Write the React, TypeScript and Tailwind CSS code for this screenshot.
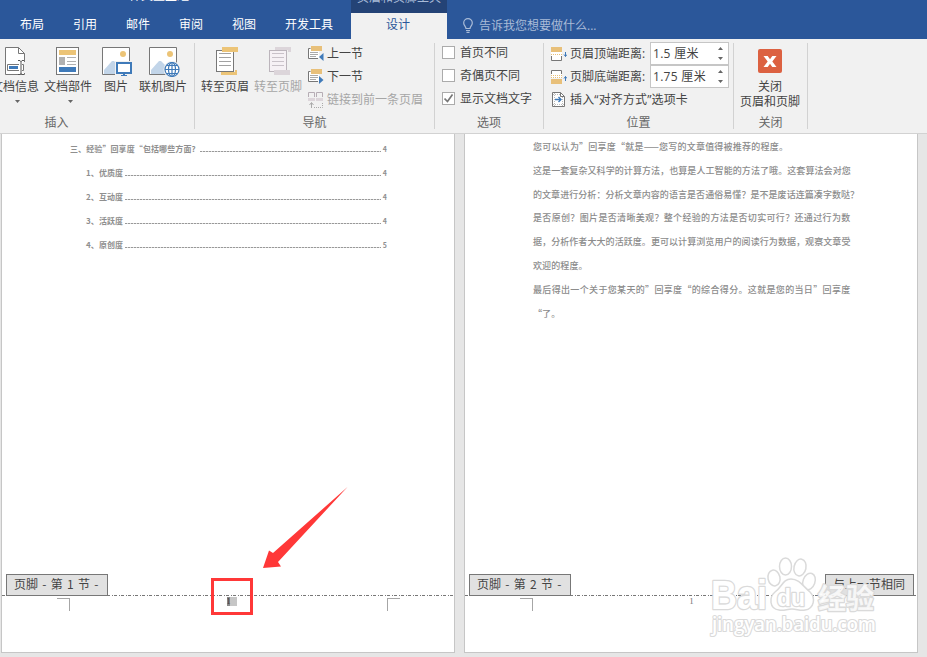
import type { ReactNode } from "react";

const tabs = ["布局", "引用", "邮件", "审阅", "视图", "开发工具"];

const toc = [
  { title: "三、经验”回享度“包括哪些方面?", page: "4", className: "pl-0", leader: "ml-1 mr-0.5" },
  { title: "1、优质度", page: "4", className: "pl-4", leader: "mx-0.5" },
  { title: "2、互动度", page: "4", className: "pl-4", leader: "mx-0.5" },
  { title: "3、活跃度", page: "4", className: "pl-4", leader: "mx-0.5" },
  { title: "4、原创度", page: "5", className: "pl-4", leader: "mx-0.5" },
];

const paragraphs = [
  { text: "您可以认为”回享度“就是——您写的文章值得被推荐的程度。", className: "tracking-[0.22px]" },
  { text: "这是一套复杂又科学的计算方法，也算是人工智能的方法了哦。这套算法会对您", className: "tracking-[0.08px]" },
  { text: "的文章进行分析：分析文章内容的语言是否通俗易懂？是不是废话连篇凑字数哒？", className: "tracking-[0.06px]" },
  { text: "是否原创？图片是否清晰美观？整个经验的方法是否切实可行？还通过行为数", className: "tracking-[0.34px]" },
  { text: "据，分析作者大大的活跃度。更可以计算浏览用户的阅读行为数据，观察文章受", className: "tracking-[0.07px]" },
  { text: "欢迎的程度。", className: "tracking-[0.1px]" },
  { text: "最后得出一个关于您某天的”回享度“的综合得分。这就是您的当日”回享度", className: "tracking-[0.34px]" },
  { text: "“了。", className: "tracking-[0.1px]" },
];

function Group({ label, className, children }: { label: string; className: string; children: ReactNode }) {
  return (
    <section className={`relative flex h-[86px] shrink-0 flex-col border-r border-[#d2d2d2] ${className}`}>
      <div className="flex h-[70px]">{children}</div>
      <div className="h-4 text-center leading-5 text-[#666]">{label}</div>
    </section>
  );
}

function BigButton({ label, icon, className = "", arrow = false }: { label: string; icon: ReactNode; className?: string; arrow?: boolean }) {
  return (
    <button className={`flex shrink-0 flex-col items-center whitespace-nowrap ${className}`}>
      {icon}
      <span className="h-4 leading-4">{label}</span>
      {arrow && (
        <svg width="5" height="3" viewBox="0 0 5 3" className="mt-[5px] ml-[5px]">
          <path d="M0 0h5L2.500 3z" fill="#666" />
        </svg>
      )}
    </button>
  );
}

function DocInfoIcon() {
  return (
    <svg width="32" height="36" viewBox="0 0 32 36" fill="none">
      <path d="M6.500 4.500h13l6 6v21h-19z" fill="#fff" stroke="#777" />
      <path d="M19.500 4.500v6h6" stroke="#777" />
      <path d="M24 19h3v11h-3z" fill="#f1f1f1" />
      <path d="M8.500 21.500h16v6h-16z" fill="#fff" stroke="#777" />
      <path d="M10 23h9v3h-9z" fill="#3f7ab9" />
      <path d="M20 17h3v14h-3z" fill="#fff" />
      <path d="M19 17.500h2l1 1 1-1h2M22 18v13M19 31.500h2l1-1 1 1h2" stroke="#555" />
    </svg>
  );
}

function DocPartsIcon() {
  return (
    <svg width="32" height="36" viewBox="0 0 32 36" fill="none" shapeRendering="crispEdges">
      <path d="M4.500 4.500h22v27h-22z" fill="#fff" stroke="#777" />
      <path d="M7 7h17v5H7z" fill="#ecc477" />
      <path d="M7 14h6v8H7z" fill="#b1b1b1" />
      <path d="M15 14.500h9M15 18.500h9M15 21.500h9" stroke="#b1b1b1" />
      <path d="M7 24h17v5H7z" fill="#3f7ab9" />
    </svg>
  );
}

function PictureIcon({ online = false }: { online?: boolean }) {
  return (
    <svg width="32" height="36" viewBox="0 0 32 36" fill="none" className="overflow-visible">
      <path d="M2.500 4.500h27v27h-27z" fill="#fff" stroke="#777" />
      <circle cx="23" cy="11" r="3" fill="#ecc477" />
      <path d="M4 27l8-9h2l5 5v8H4z" fill="#c2d5e9" />
      {online ? (
        <g>
          <circle cx="25" cy="26.500" r="8.500" fill="#f1f1f1" />
          <g stroke="#3f7ab9" strokeWidth="1.200">
            <circle cx="25" cy="26.500" r="7" fill="#fff" />
            <ellipse cx="25" cy="26.500" rx="3.500" ry="7" />
            <path d="M18 26.500h14M25 19.500v14M19.500 22.500h11M19.500 30.500h11" />
          </g>
        </g>
      ) : (
        <g shapeRendering="crispEdges">
          <path d="M15 18h18v14H15z" fill="#f1f1f1" />
          <path d="M17 20h14v10H17z" fill="#fff" stroke="#3f7ab9" strokeWidth="2" />
          <path d="M23 31h2v1h2v1h-6v-1h2z" fill="#3f7ab9" />
        </g>
      )}
    </svg>
  );
}

function GotoIcon({ footer = false }: { footer?: boolean }) {
  const line = footer ? "#bcb5bc" : "#777";
  const accent = footer ? "#dcd5da" : "#ecc477";
  return (
    <svg width="32" height="36" viewBox="0 0 32 36" fill="none" shapeRendering="crispEdges">
      {footer ? (
        <path d="M13 4h16v5h-3V7H13z" fill={accent} />
      ) : (
        <path d="M12 29h14v-2h2v5H12z" fill={accent} />
      )}
      <path d="M7.500 7.500h17v21h-17z" fill={footer ? "#f6f1f5" : "#fff"} stroke={line} />
      <path d="M10 10.500h12M10 14.500h12M10 18.500h12M10 22.500h12" stroke={footer ? "#c9c2c9" : "#a2a2a2"} />
      {footer ? <path d="M12 27h16v5H12z" fill={accent} /> : <path d="M13 4h16v5H13z" fill={accent} />}
    </svg>
  );
}

function SectionIcon({ next = false }: { next?: boolean }) {
  return (
    <svg width="16" height="16" viewBox="0 0 16 16" fill="none">
      <path d="M1 3h10v9H1z" fill="#fff" />
      <path d="M2.500 2.500H.500v10H10" stroke="#777" />
      <path d="M2 6.500h8M2 8.500h8M2 10.500h6" stroke="#aaa" />
      <path d="M3 0h11v5H3z" fill="#e8c07a" />
      {next ? <path d="M11 7l4.500 4L11 15z" fill="#3f7ab9" /> : <path d="M15.500 7L11 11l4.500 4z" fill="#3f7ab9" />}
    </svg>
  );
}

function LinkPreviousIcon() {
  return (
    <svg width="16" height="16" viewBox="0 0 16 16" fill="none">
      <path d="M.500 5V.500h6V5M8.500 5V.500h6V5" stroke="#b6adb5" />
      <path d="M0 6h7v3H0zM8 6h7v3H8z" fill="#dcd5da" />
      <path d="M3.500 16v-5M1.500 13l2-2.500 2 2.500" stroke="#aaa" />
      <path d="M6 15.500h8.500V10" stroke="#aaa" strokeDasharray="1 1" />
    </svg>
  );
}

function MarginIcon({ bottom = false }: { bottom?: boolean }) {
  return (
    <svg width="16" height="16" viewBox="0 0 16 16" fill="none">
      {bottom ? (
        <g>
          <path d="M0 1h11v8H0z" fill="#fff" />
          <path d="M.500 5V1.500h10V5" stroke="#777" />
          <path d="M0 6.500h11M0 8.500h11" stroke="#e8c07a" strokeDasharray="1 1" />
          <path d="M0 10h11v5H0z" fill="#e8c07a" />
          <path d="M14.500 12V7.500M13 9.500l1.500-2 1.500 2" stroke="#3f7ab9" />
        </g>
      ) : (
        <g>
          <path d="M0 6h11v8H0z" fill="#fff" />
          <path d="M.500 10v4.500h10V10" stroke="#777" />
          <path d="M0 1h11v5H0z" fill="#e8c07a" />
          <path d="M0 8.500h11" stroke="#e8c07a" strokeDasharray="1 1" />
          <path d="M14.500 6v4.500M13 8.500l1.500 2 1.500-2" stroke="#3f7ab9" />
        </g>
      )}
    </svg>
  );
}

function AlignTabIcon() {
  return (
    <svg width="16" height="16" viewBox="0 0 16 16" fill="none">
      <path d="M1.500.500h8l4 4v10h-12z" fill="#fff" stroke="#777" />
      <path d="M9.500.500v4h4" stroke="#777" />
      <path d="M3.500 1v13M11.500 5v9M2 2.500h7M2 12.500h11" stroke="#bbb" strokeDasharray="1 1" />
      <path d="M4 7.500h6M7.500 5l2.500 2.500L7.500 10" stroke="#3f7ab9" strokeWidth="1.400" />
    </svg>
  );
}

function Check({ label, checked = false }: { label: string; checked?: boolean }) {
  return (
    <label className="flex h-[23px] items-center gap-[5px] whitespace-nowrap">
      <span className="flex size-[13px] items-center justify-center border border-[#ababab] bg-white">
        {checked && (
          <svg width="9" height="9" viewBox="0 0 9 9" fill="none">
            <path d="M.500 4.500l3 3 5-7" stroke="#777" strokeWidth="1.700" />
          </svg>
        )}
      </span>
      {label}
    </label>
  );
}

function Spinner({ value }: { value: string }) {
  return (
    <div className="flex h-[23px] w-[79px] items-center justify-between border border-[#c6c6c6] bg-white pr-[5px] pl-0.5 text-[#444]">
      <span className="tracking-[0.3px]">{value}</span>
      <svg width="5" height="13" viewBox="0 0 5 13" fill="#666">
        <path d="M0 3L2.500 0 5 3zM0 10h5l-2.500 3z" />
      </svg>
    </div>
  );
}

function Footer({ children }: { children: ReactNode }) {
  return (
    <footer className="relative h-[57px]">
      <div className="h-px bg-[repeating-linear-gradient(90deg,#777_0_3px,transparent_3px_5px,#777_5px_6px,transparent_6px_7px)]" />
      <div className="mt-0.5 flex justify-between pr-[54px] pl-[55px]">
        <span className="size-[13px] border-t border-r border-[#a6a6a6]" />
        {children}
        <span className="size-[13px] border-t border-l border-[#a6a6a6]" />
      </div>
    </footer>
  );
}

function FooterTag({ text, className }: { text: string; className: string }) {
  return (
    <div className={`absolute bottom-14 h-[22px] border border-[#777] bg-[#e1e1e1] pl-[7px] text-xs leading-[18px] whitespace-pre text-[#444] ${className}`}>
      {text}
    </div>
  );
}

function Watermark() {
  return (
    <div className="absolute top-[557px] left-[709px] h-20 w-[172px]">
      <svg width="172" height="80" viewBox="0 0 172 80" fill="#fff" stroke="#dadada" strokeWidth="1.500" fontFamily="'Liberation Sans', 'Noto Sans CJK SC', sans-serif">
        <ellipse cx="76.500" cy="9.500" rx="6" ry="8.500" />
        <ellipse cx="91" cy="10.500" rx="6" ry="8.500" transform="rotate(12 91 10.500)" />
        <ellipse cx="65" cy="21" rx="6" ry="8" transform="rotate(-12 65 21)" />
        <ellipse cx="100" cy="24.500" rx="6" ry="8.500" transform="rotate(20 100 24.500)" />
        <path d="M82 22c-8 0-9 8-16 13-6 5-6 17 4 18 5 1 8-1 13-1s8 2 13 1c9-1 11-12 5-18-7-6-11-13-19-13z" />
        <g fontWeight="bold" paintOrder="stroke" strokeWidth="2.600" strokeLinejoin="round">
          <text x="2" y="52" fontSize="40" textLength="56" lengthAdjust="spacingAndGlyphs">Bai</text>
          <text x="68" y="49" fontSize="24" textLength="28" lengthAdjust="spacingAndGlyphs">du</text>
          <text x="109" y="52" fontSize="28" textLength="56" fillOpacity="0.8">经验</text>
        </g>
        <text x="3" y="74" fontSize="19" textLength="164" paintOrder="stroke" strokeWidth="2.200" strokeLinejoin="round" fontFamily="'Open Sans', sans-serif" fontWeight="600">jingyan.baidu.com</text>
      </svg>
    </div>
  );
}

export default function App() {
  return (
    <div className="relative flex h-[657px] w-[927px] flex-col overflow-hidden bg-[#e6e6e6] font-['Open_Sans','Noto_Sans_CJK_SC',sans-serif] text-xs text-[#444]">
      <header className="relative flex h-[39px] shrink-0 bg-[#2b579a] text-white">
        <div className="absolute -top-[12px] left-[129px] leading-4">样突至些短</div>
        <nav className="flex w-[351px] gap-[29px] pt-[11px] pl-5">
          {tabs.map((tab) => (
            <span key={tab} className="h-7 leading-7 whitespace-nowrap">{tab}</span>
          ))}
        </nav>
        <div className="flex w-24 flex-col text-center">
          <div className="relative h-[13px] overflow-hidden bg-[#244376] text-[#a9bbd7]">
            <span className="absolute -top-[10px] left-0 w-full leading-4 whitespace-nowrap">页眉和页脚工具</span>
          </div>
          <div className="h-[26px] bg-[#f1f1f1] pr-0.5 leading-6 text-[#2b579a]">设计</div>
        </div>
        <div className="flex items-start gap-[6px] pt-[18px] pl-4 text-[#a9bbd7]">
          <svg width="10" height="15" viewBox="0 0 10 15" fill="none" stroke="#a9bbd7" strokeWidth="1.200">
            <path d="M3 10.500C3 8.500.700 7.500.700 4.900a4.300 4.300 0 018.600 0C9.300 7.500 7 8.500 7 10.500zM3 12.500h4M3.500 14.300h3" />
          </svg>
          <span className="leading-4">告诉我您想要做什么...</span>
        </div>
      </header>

      <div className="flex h-[95px] shrink-0 border-b border-[#d2d2d2] bg-[#f1f1f1] pt-1">
        <Group label="插入" className="w-[195px] [&>div:last-child]:w-[113px]">
          <BigButton label="文档信息" icon={<DocInfoIcon />} className="-ml-[9px] w-12" arrow />
          <BigButton label="文档部件" icon={<DocPartsIcon />} className="ml-[5px] w-12" arrow />
          <BigButton label="图片" icon={<PictureIcon />} className="ml-2 w-8" />
          <BigButton label="联机图片" icon={<PictureIcon online />} className="ml-[7px] w-12" />
        </Group>
        <Group label="导航" className="w-60">
          <BigButton label="转至页眉" icon={<GotoIcon />} className="ml-[6px] w-12" />
          <BigButton label="转至页脚" icon={<GotoIcon footer />} className="ml-[5px] w-12 text-[#a6a6a6]" />
          <div className="-mt-[1px] ml-[6px] flex flex-col whitespace-nowrap">
            <div className="flex h-[23px] items-center gap-[3px]"><SectionIcon />上一节</div>
            <div className="flex h-[23px] items-center gap-[3px]"><SectionIcon next />下一节</div>
            <div className="flex h-[23px] items-center gap-[3px] text-[#a6a6a6]"><LinkPreviousIcon />链接到前一条页眉</div>
          </div>
        </Group>
        <Group label="选项" className="w-[109px]">
          <div className="-mt-0.5 ml-[7px]">
            <Check label="首页不同" />
            <Check label="奇偶页不同" />
            <Check label="显示文档文字" checked />
          </div>
        </Group>
        <Group label="位置" className="w-[190px]">
          <div className="-mt-[1px] ml-[7px] flex flex-col whitespace-nowrap">
            <div className="flex h-[23px] items-center">
              <MarginIcon />
              <span className="ml-[3px] w-20">页眉顶端距离:</span>
              <Spinner value="1.5 厘米" />
            </div>
            <div className="flex h-[23px] items-center">
              <MarginIcon bottom />
              <span className="ml-[3px] w-20">页脚底端距离:</span>
              <Spinner value="1.75 厘米" />
            </div>
            <div className="flex h-[23px] items-center gap-[3px]"><AlignTabIcon /><span className="tracking-[0.15px]">插入“对齐方式”选项卡</span></div>
          </div>
        </Group>
        <Group label="关闭" className="w-[74px]">
          <button className="flex w-full flex-col items-center pt-1.5 pr-px leading-[15px]">
            <svg width="24" height="24" viewBox="0 0 24 24" className="mb-1.5 shrink-0">
              <rect width="24" height="24" rx="2" fill="#dc6141" />
              <path d="M5.500 7h4.200l2.300 3.200L14.300 7h4.200l-4.200 5.500 4.200 5.500h-4.200L12 14.700 9.700 18H5.500l4.200-5.500z" fill="#fff" />
            </svg>
            <span>关闭</span>
            <span className="whitespace-nowrap">页眉和页脚</span>
          </button>
        </Group>
      </div>

      <main className="flex gap-[9px] pl-px font-['Noto_Sans_CJK_SC',sans-serif]">
        <article className="relative flex h-[519px] w-[454px] flex-col border border-t-0 border-[#c6c6c6] bg-white">
          <div className="h-[461px] pt-[3px] pr-[67px] pl-[68px] text-[8px] font-bold text-[#8f8f8f]">
            {toc.map((row) => (
              <div key={row.title} className={`flex h-6 items-center whitespace-nowrap ${row.className}`}>
                <span className="tracking-[0.1px]">{row.title}</span>
                <span className={`mt-1 h-px flex-1 bg-[repeating-linear-gradient(90deg,#999_0_2px,#ddd_2px_3px)] ${row.leader}`} />
                <span className="pt-0.5 text-[7px]">{row.page}</span>
              </div>
            ))}
          </div>
          <Footer>
            <span className="-mt-px mr-[-6px] flex h-[9px] w-2.5 bg-[#c6c6c6] font-['Liberation_Serif',serif] text-[8px] leading-[9px] text-[#333]">
              <span className="w-[3px] bg-[#8a8a8a]">1</span>
            </span>
          </Footer>
          <FooterTag text="页脚 - 第 1 节 -" className="left-1 w-[102px] [word-spacing:1.6px]" />
        </article>
        <article className="relative flex h-[519px] w-[454px] flex-col border border-t-0 border-[#c6c6c6] bg-white">
          <div className="h-[461px] pt-px pl-[68px] text-[9px] font-medium text-[#8c8c8c]">
            {paragraphs.map((line) => (
              <p key={line.text} className={`h-[23.8px] leading-[24px] whitespace-nowrap ${line.className}`}>{line.text}</p>
            ))}
          </div>
          <Footer>
            <span className="font-['Liberation_Serif',serif] text-[9px] leading-[7px] text-[#777]">1</span>
          </Footer>
          <FooterTag text="页脚 - 第 2 节 -" className="left-1 w-[102px] [word-spacing:1.6px]" />
          <FooterTag text="与上一节相同" className="right-[3px] w-[89px]" />
        </article>
      </main>

      <div className="absolute top-[578px] left-[211px] h-[37px] w-[42px] border-[3px] border-[#ff3838]" />
      <svg width="90" height="84" viewBox="0 0 90 84" className="absolute top-[486px] left-[261px]">
        <path d="M86.500 1L17 76l3 4.500L2 82l6-17.500 4 2.500z" fill="#ff3838" />
      </svg>
      <Watermark />
    </div>
  );
}
